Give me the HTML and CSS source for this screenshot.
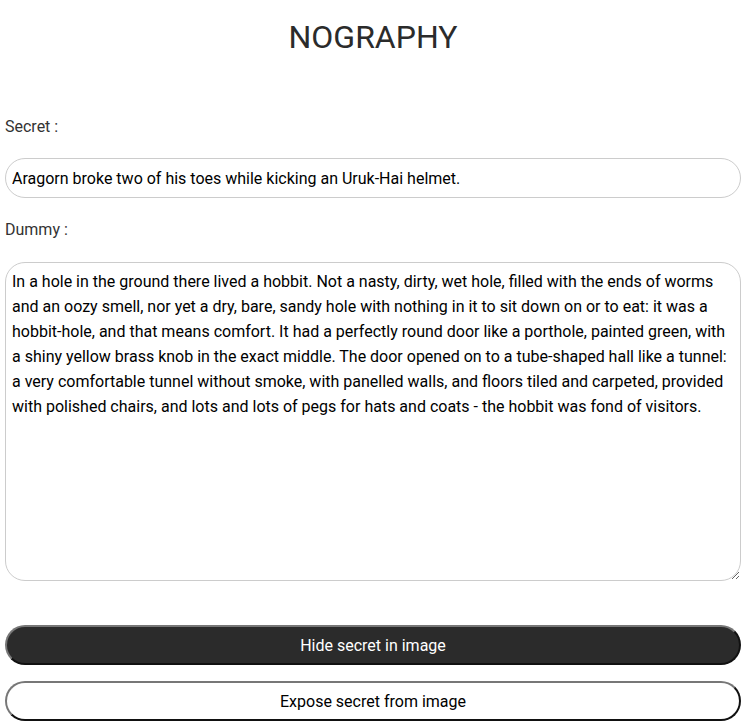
FILE: index.html
```html
<!DOCTYPE html>
<html>
<head>
<meta charset="utf-8">
<link rel="stylesheet" href="styles.css">
</head>
<body>
<div class="page">
  <h1 class="title">NOGRAPHY</h1>
  <label class="label">Secret :</label>
  <input class="secret" type="text" value="Aragorn broke two of his toes while kicking an Uruk-Hai helmet.">
  <label class="label">Dummy :</label>
  <textarea class="dummy">In a hole in the ground there lived a hobbit. Not a nasty, dirty, wet hole, filled with the ends of worms and an oozy smell, nor yet a dry, bare, sandy hole with nothing in it to sit down on or to eat: it was a hobbit-hole, and that means comfort. It had a perfectly round door like a porthole, painted green, with a shiny yellow brass knob in the exact middle. The door opened on to a tube-shaped hall like a tunnel: a very comfortable tunnel without smoke, with panelled walls, and floors tiled and carpeted, provided with polished chairs, and lots and lots of pegs for hats and coats - the hobbit was fond of visitors.</textarea>
  <div class="actions">
    <button class="btn btn-dark">Hide secret in image</button>
    <button class="btn btn-light">Expose secret from image</button>
  </div>
</div>
</body>
</html>
```
FILE: styles.css
```css
html, body {
  margin: 0;
  padding: 0;
  background: #fff;
}
body {
  font-family: Roboto, "Liberation Sans", sans-serif;
  color: #333;
}
.page {
  padding: 0 5px;
  display: flex;
  flex-direction: column;
}
.title {
  margin: 16px 0 0;
  font-size: 32px;
  font-weight: 400;
  line-height: 42px;
  text-align: center;
  color: #2b2b2b;
}
.label {
  font-size: 16px;
  line-height: 18px;
  color: #333;
}
.title + .label {
  margin-top: 60px;
}
.secret {
  margin-top: 22px;
  height: 40px;
  box-sizing: border-box;
  border: 1px solid #ccc;
  border-radius: 20px;
  padding: 0 6px;
  font-family: Roboto, "Liberation Sans", sans-serif;
  font-size: 16px;
  color: #000;
  outline: none;
}
.secret + .label {
  margin-top: 23px;
}
.dummy {
  margin-top: 23px;
  height: 319px;
  box-sizing: border-box;
  border: 1px solid #ccc;
  border-radius: 20px;
  padding: 6px 6px;
  font-family: Roboto, "Liberation Sans", sans-serif;
  font-size: 16px;
  line-height: 25px;
  color: #000;
  outline: none;
  resize: vertical;
}
.actions {
  margin-top: 44px;
  display: flex;
  flex-direction: column;
  gap: 16px;
}
.btn {
  height: 40px;
  box-sizing: border-box;
  border-radius: 20px;
  border-width: 2px;
  border-style: solid;
  border-color: #777 #111 #111 #777;
  font-family: Roboto, "Liberation Sans", sans-serif;
  font-size: 16px;
  padding: 0;
}
.btn-dark {
  background: #2b2b2b;
  color: #fff;
}
.btn-light {
  background: #fff;
  color: #000;
}
```
